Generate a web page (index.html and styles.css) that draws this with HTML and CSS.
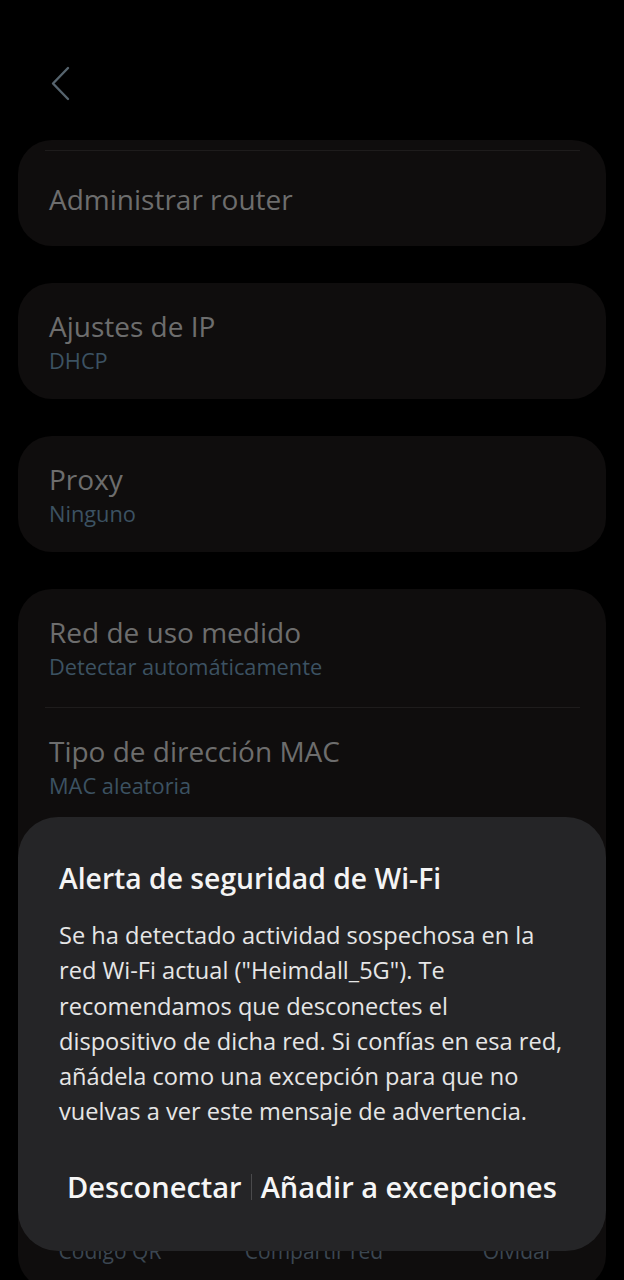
FILE: index.html
```html
<!DOCTYPE html>
<html lang="es">
<head>
<meta charset="utf-8">
<title>Wi-Fi</title>
<link rel="stylesheet" href="styles.css">
</head>
<body>
<div class="screen">
  <header class="topbar">
    <svg class="back" width="24" height="40" viewBox="0 0 24 40" aria-hidden="true">
      <path d="M18 4 L3 19.5 L18 35" fill="none" stroke="#56646e" stroke-width="2.4" stroke-linecap="round" stroke-linejoin="round"/>
    </svg>
  </header>

  <main class="list">
    <section class="card card-cut">
      <div class="divider"></div>
      <div class="row row-single"><span class="title">Administrar router</span></div>
    </section>

    <section class="card">
      <div class="row"><span class="title">Ajustes de IP</span><span class="sub">DHCP</span></div>
    </section>

    <section class="card">
      <div class="row"><span class="title">Proxy</span><span class="sub">Ninguno</span></div>
    </section>

    <section class="card card-open">
      <div class="row"><span class="title">Red de uso medido</span><span class="sub">Detectar automáticamente</span></div>
      <div class="divider"></div>
      <div class="row"><span class="title">Tipo de dirección MAC</span><span class="sub">MAC aleatoria</span></div>
    </section>
  </main>

  <nav class="bottombar">
    <span class="action">Código QR</span>
    <span class="action">Compartir red</span>
    <span class="action">Olvidar</span>
  </nav>

  <div class="dialog" role="dialog">
    <h2 class="dialog-title">Alerta de seguridad de Wi-Fi</h2>
    <p class="dialog-body">Se ha detectado actividad sospechosa en la<br>red Wi-Fi actual ("Heimdall_5G"). Te<br>recomendamos que desconectes el<br>dispositivo de dicha red. Si confías en esa red,<br>añádela como una excepción para que no<br>vuelvas a ver este mensaje de advertencia.</p>
    <div class="dialog-actions">
      <button class="btn">Desconectar</button>
      <span class="sep"></span>
      <button class="btn">Añadir a excepciones</button>
    </div>
  </div>
</div>
</body>
</html>
```

FILE: styles.css
```css
* { box-sizing: border-box; }
html, body {
  margin: 0;
  padding: 0;
  background: #000;
}
body {
  font-family: "Open Sans", "Noto Sans", sans-serif;
  width: 624px;
  height: 1280px;
  overflow: hidden;
}
.screen {
  position: relative;
  width: 624px;
  height: 1280px;
  overflow: hidden;
  background: #000;
}
.topbar {
  height: 140px;
  padding: 64px 0 0 50px;
}
.back { display: block; }

.list {
  display: flex;
  flex-direction: column;
  gap: 37px;
  padding: 0 18px;
}
.card {
  background: #0f0d0d;
  border-radius: 34px;
  padding: 0;
}
.card-cut {
  padding-top: 10px;
}
.card-open {
  height: 700px;
}
.divider {
  height: 1px;
  background: #1e1c1c;
  margin: 0 26px 0 27px;
}
.row {
  display: flex;
  flex-direction: column;
  gap: 4px;
  padding: 26px 31px 24px;
}
.row-single {
  padding: 31px 31px 30px;
}
.card-open .row:first-child { padding-bottom: 26px; }
.title {
  font-size: 28px;
  line-height: 34px;
  color: #6d6d6d;
}
.sub {
  font-size: 21.8px;
  line-height: 28px;
  color: #3c5262;
}

.bottombar {
  position: absolute;
  left: 0;
  right: 0;
  top: 1237px;
  display: grid;
  grid-template-columns: 1fr 1fr 1fr;
  padding: 0 4px 0 8px;
  z-index: 1;
}
.action {
  text-align: center;
  font-size: 21px;
  line-height: 28px;
  color: #3b4651;
}

.dialog {
  position: absolute;
  z-index: 2;
  left: 18px;
  top: 817px;
  width: 588px;
  height: 434px;
  background: #252527;
  border-radius: 40px;
  padding: 43px 30px 0 41px;
}
.dialog-title {
  margin: 0;
  font-size: 28.3px;
  line-height: 36px;
  font-weight: 600;
  color: #f4f4f4;
}
.dialog-body {
  margin: 22px 0 0;
  font-size: 23.6px;
  line-height: 35.3px;
  color: #e6e6e6;
}
.dialog-actions {
  margin-top: 38px;
  margin-right: 11px;
  display: flex;
  align-items: center;
  justify-content: center;
  gap: 9px;
}
.btn {
  background: none;
  border: 0;
  padding: 0;
  font-family: inherit;
  font-size: 29px;
  line-height: 38px;
  font-weight: 600;
  color: #f6f6f6;
}
.sep {
  width: 1px;
  height: 26px;
  background: #4a4a4c;
}
```
